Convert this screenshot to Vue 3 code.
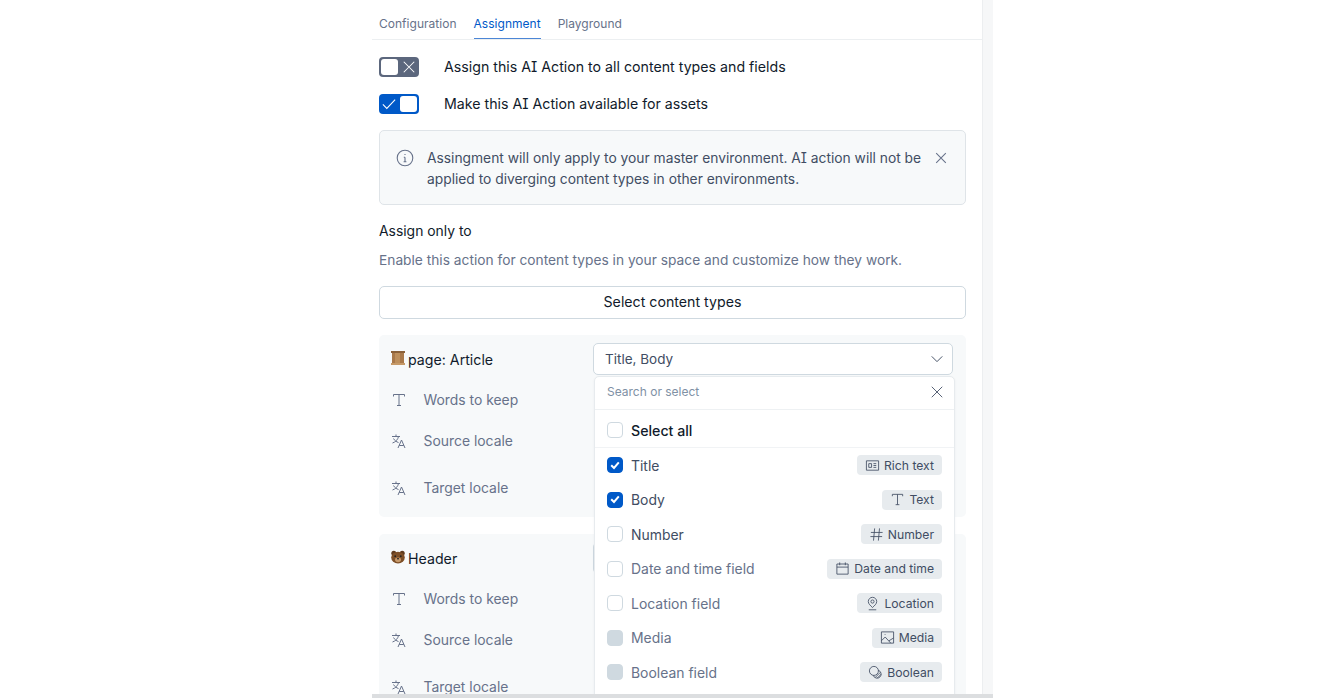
<script setup>
const icons = {
  text: "M2.5 4.5V2.5h11v2M8 2.5v11M6 13.5h4",
  rich: "M1.5 3h13v10h-13zM4 6h3v4H4zM9 6h3M9 8h3M9 10h3",
  number: "M6 1.5 4.8 14.5M11.2 1.5 10 14.5M2 5.8h12.5M1.5 10.2H14",
  date: "M2 3.2h12v10.8H2zM2 6.5h12M5 1.5v3M11 1.5v3",
  location: "M8 12.3C6 10.3 3.5 8.5 3.5 5.9a4.5 4.5 0 0 1 9 0c0 2.6-2.5 4.4-4.5 6.4zM8 4.2a1.7 1.7 0 1 0 0 3.4 1.7 1.7 0 0 0 0-3.4zM4 14.7h8",
  media: "M1.5 2h13v12h-13zM1.5 11.5 5.5 7.5 11.5 14M9.5 11.5 14.5 8.5M5 4.8h.8",
  boolean: "M6.3 1.5a4.8 4.8 0 1 0 0 9.6 4.8 4.8 0 0 0 0-9.6zM10.8 5.6a4.3 4.3 0 1 1-5.2 5.4M7.8 13.2l5.4-5.4M9.8 14l4.2-4.2",
  locale: "M1 3.5h8M5 1.5v2M7.5 3.5C7 6.5 4.5 9 1.5 10M2.5 5.5c1 2 3 3.5 5 4M7 15l3.5-8 3.5 8M8.2 12.5h4.6"
}

const fields = [
  { name: "Title", type: "Rich text", icon: "rich", state: "checked" },
  { name: "Body", type: "Text", icon: "text", state: "checked" },
  { name: "Number", type: "Number", icon: "number", state: "" },
  { name: "Date and time field", type: "Date and time", icon: "date", state: "", muted: true },
  { name: "Location field", type: "Location", icon: "location", state: "", muted: true },
  { name: "Media", type: "Media", icon: "media", state: "disabled", muted: true },
  { name: "Boolean field", type: "Boolean", icon: "boolean", state: "disabled", muted: true }
]

const params = [
  { label: "Words to keep", icon: "text" },
  { label: "Source locale", icon: "locale" },
  { label: "Target locale", icon: "locale", wide: true }
]
</script>

<template>
  <div class="page">
    <div class="sheet">
      <div class="columns">
        <main class="panel">
          <nav class="tabs">
            <a>Configuration</a>
            <a class="active">Assignment</a>
            <a>Playground</a>
          </nav>

          <div class="content">
            <div class="switch-row">
              <span class="switch off">
                <span class="knob"></span>
                <svg viewBox="0 0 16 16" class="switch-icon"><path d="M2 2l12 12M14 2 2 14" /></svg>
              </span>
              <span class="switch-label">Assign this AI Action to all content types and fields</span>
            </div>
            <div class="switch-row">
              <span class="switch on">
                <svg viewBox="0 0 16 16" class="switch-icon"><path d="M1 8.5 5.5 13 15 3" /></svg>
                <span class="knob"></span>
              </span>
              <span class="switch-label">Make this AI Action available for assets</span>
            </div>

            <div class="note">
              <svg viewBox="0 0 18 18" class="note-icon">
                <circle cx="9" cy="9" r="7.8" />
                <path d="M9 8.2v4.6M7.8 8.2H9M7.6 12.8h2.8M9 5v.9" />
              </svg>
              <p>Assingment will only apply to your master environment. AI action will not be applied to diverging content types in other environments.</p>
              <svg viewBox="0 0 16 16" class="close-icon"><path d="M2.5 2.5l11 11M13.5 2.5l-11 11" /></svg>
            </div>

            <h3>Assign only to</h3>
            <p class="hint">Enable this action for content types in your space and customize how they work.</p>
            <button class="select-btn">Select content types</button>

            <section class="card">
              <div class="card-head">
                <span class="title">
                  <svg viewBox="0 0 14 14" class="emoji">
                    <rect x="1" y="1" width="12" height="12" fill="#a9794a" />
                    <rect x="0" y="0" width="14" height="2" fill="#8a6038" />
                    <rect x="0" y="12" width="14" height="2" fill="#c69a68" />
                    <rect x="4" y="2" width="5" height="10" fill="#bd8f5c" />
                  </svg>
                  page: Article
                </span>
                <div class="select">
                  <span>Title, Body</span>
                  <svg viewBox="0 0 16 16" class="chevron"><path d="M2 5l6 6 6-6" /></svg>
                </div>
              </div>
              <div v-for="p in params" :key="p.label" class="param" :class="{ wide: p.wide }">
                <svg viewBox="0 0 16 16" class="param-icon"><path :d="icons[p.icon]" /></svg>
                <span>{{ p.label }}</span>
              </div>

              <div class="dropdown">
                <div class="search">
                  <span>Search or select</span>
                  <svg viewBox="0 0 16 16" class="search-close"><path d="M2 2l12 12M14 2 2 14" /></svg>
                </div>
                <div class="all">
                  <span class="box"></span>
                  <span>Select all</span>
                </div>
                <div v-for="f in fields" :key="f.name" class="option" :class="{ muted: f.muted }">
                  <span class="box" :class="f.state">
                    <svg v-if="f.state === 'checked'" viewBox="0 0 16 16"><path d="M4.2 8.2 7 11l4.8-5.6" /></svg>
                  </span>
                  <span class="option-name">{{ f.name }}</span>
                  <span class="badge">
                    <svg viewBox="0 0 16 16"><path :d="icons[f.icon]" /></svg>
                    {{ f.type }}
                  </span>
                </div>
              </div>
            </section>

            <section class="card">
              <div class="card-head">
                <span class="title">
                  <svg viewBox="0 0 14 14" class="emoji">
                    <circle cx="2.8" cy="3.2" r="2.5" fill="#5f3b1e" />
                    <circle cx="11.2" cy="3.2" r="2.5" fill="#5f3b1e" />
                    <ellipse cx="7" cy="7.6" rx="6.8" ry="5.8" fill="#7d4f27" />
                    <ellipse cx="7" cy="9.8" rx="3" ry="2.4" fill="#c79a6b" />
                    <circle cx="4.2" cy="6.2" r=".9" fill="#222" />
                    <circle cx="9.8" cy="6.2" r=".9" fill="#222" />
                    <ellipse cx="7" cy="8.8" rx="1.1" ry=".8" fill="#222" />
                  </svg>
                  Header
                </span>
                <div class="select"></div>
              </div>
              <div v-for="p in params" :key="p.label" class="param" :class="{ wide: p.wide }">
                <svg viewBox="0 0 16 16" class="param-icon"><path :d="icons[p.icon]" /></svg>
                <span>{{ p.label }}</span>
              </div>
            </section>
          </div>
        </main>
        <div class="gutter"></div>
      </div>
      <div class="strip"></div>
    </div>
  </div>
</template>

<style scoped>
.page {
  width: 1320px;
  height: 698px;
  padding-left: 372px;
  box-sizing: border-box;
  overflow: hidden;
  background: #fff;
  font-family: Inter, "Liberation Sans", sans-serif;
  font-feature-settings: "cv08";
  font-size: 14px;
  color: #111b2b;
}

.sheet {
  width: 621px;
  height: 698px;
  display: flex;
  flex-direction: column;
}

.columns {
  flex: 1;
  min-height: 0;
  display: flex;
  overflow: hidden;
}

.panel {
  width: 610px;
  flex-shrink: 0;
}

.gutter {
  flex: 1;
  background: #f6f7f8;
  border-left: 1px solid #eceef0;
}

.strip {
  height: 4px;
  background: #dcdee0;
}

.tabs {
  height: 40px;
  box-sizing: border-box;
  display: flex;
  gap: 17px;
  padding-left: 7px;
  border-bottom: 1px solid #eceff1;
}

.tabs a {
  height: 39px;
  box-sizing: border-box;
  padding-top: 16px;
  font-size: 12px;
  letter-spacing: 0.002em;
  line-height: 16px;
  color: #67728a;
}

.tabs a.active {
  color: #0059c8;
  border-bottom: 1px solid #4c86d6;
}

.content {
  width: 587px;
  margin-left: 7px;
  padding-top: 17px;
}

.switch-row {
  height: 20px;
  display: flex;
  align-items: center;
  gap: 25px;
  margin-bottom: 16.5px;
  font-size: 14.2px;
}

.switch-label {
  margin-top: -1px;
}

.switch {
  width: 40px;
  height: 20px;
  box-sizing: border-box;
  border-radius: 4px;
  padding: 2px;
  display: flex;
  align-items: stretch;
  justify-content: space-between;
}

.switch.off {
  background: #5c677d;
}

.switch.on {
  background: #0059c8;
}

.knob {
  width: 17px;
  background: #fff;
  border-radius: 3px;
}

.switch-icon {
  width: 14px;
  height: 14px;
  margin: 1px 1px 0;
  fill: none;
  stroke: #fff;
  stroke-width: 1.2;
}

.note {
  height: 75px;
  box-sizing: border-box;
  padding: 17px 17px 0 16px;
  display: flex;
  align-items: flex-start;
  background: #f7f9fa;
  border: 1px solid #dfe4e8;
  border-radius: 5px;
}

.note p {
  margin: 0 0 0 13px;
  flex: 1;
  font-size: 13.8px;
  line-height: 21px;
  color: #414d63;
}

.note-icon {
  width: 18px;
  height: 18px;
  margin-top: 1px;
  flex-shrink: 0;
  fill: none;
  stroke: #67728a;
  stroke-width: 1.1;
}

.close-icon {
  width: 14px;
  height: 14px;
  margin: 3px 0 0 11px;
  flex-shrink: 0;
  fill: none;
  stroke: #67728a;
  stroke-width: 1.2;
}

h3 {
  margin: 18px 0 0;
  font-size: 13.9px;
  line-height: 16px;
  font-weight: 400;
  color: #111b2b;
}

.hint {
  margin: 13px 0 0;
  font-size: 13.75px;
  line-height: 16px;
  color: #67728a;
}

.select-btn {
  display: block;
  width: 100%;
  height: 33px;
  margin-top: 18px;
  padding: 0 0 2px;
  font: inherit;
  font-size: 14.2px;
  color: #111b2b;
  background: #fff;
  border: 1px solid #cfd9e0;
  border-radius: 5px;
}

.card {
  position: relative;
  height: 182px;
  box-sizing: border-box;
  margin-top: 16px;
  margin-bottom: 17px;
  padding: 8px 13px 0 12px;
  background: #f7f9fa;
  border-radius: 5px;
}

.card-head {
  height: 32px;
  display: flex;
  align-items: center;
  justify-content: space-between;
}

.title {
  display: flex;
  align-items: center;
  gap: 3px;
  font-size: 14.2px;
  color: #111b2b;
}

.emoji {
  width: 14px;
  height: 14px;
  margin-top: -2px;
}

.select {
  width: 360px;
  height: 32px;
  box-sizing: border-box;
  padding: 0 8px 0 11px;
  display: flex;
  align-items: center;
  justify-content: space-between;
  background: #fff;
  border: 1px solid #cfd9e0;
  border-radius: 5px;
  font-size: 13.5px;
  color: #414d63;
}

.chevron {
  width: 14px;
  height: 14px;
  fill: none;
  stroke: #414d63;
  stroke-width: 1.1;
}

.param {
  height: 32px;
  margin-top: 9px;
  display: flex;
  align-items: center;
  gap: 16.5px;
  font-size: 13.9px;
  color: #67728a;
}

.param.wide {
  margin-top: 15px;
}

.param-icon {
  width: 16px;
  height: 16px;
  flex-shrink: 0;
  fill: none;
  stroke: #67728a;
  stroke-width: 1;
}

.dropdown {
  position: absolute;
  left: 215px;
  top: 41px;
  width: 361px;
  box-sizing: border-box;
  padding-bottom: 40px;
  background: #fff;
  border: 1px solid #e7ebee;
  border-radius: 5px 5px 0 0;
  box-shadow: 0 1px 3px rgba(25, 37, 50, 0.05);
  z-index: 2;
}

.search {
  height: 33px;
  box-sizing: border-box;
  padding: 0 10px 3px 12px;
  display: flex;
  align-items: center;
  justify-content: space-between;
  border-bottom: 1px solid #eef1f3;
  font-size: 12px;
  color: #8091a5;
}

.search-close {
  width: 14px;
  height: 14px;
  fill: none;
  stroke: #414d63;
  stroke-width: 1;
}

.all {
  height: 38px;
  box-sizing: border-box;
  padding: 3px 12px 0;
  display: flex;
  align-items: center;
  gap: 8px;
  border-bottom: 1px solid #f1f3f5;
  font-size: 14.2px;
  font-weight: 500;
  color: #111b2b;
}

.option {
  height: 34.5px;
  box-sizing: border-box;
  padding: 0 12px;
  display: flex;
  align-items: center;
  gap: 8px;
  font-size: 13.95px;
  color: #414d63;
}

.option.muted {
  color: #67728a;
}

.option-name {
  flex: 1;
}

.box {
  width: 16px;
  height: 16px;
  box-sizing: border-box;
  flex-shrink: 0;
  background: #fff;
  border: 1.5px solid #cfd9e0;
  border-radius: 4px;
}

.box svg {
  display: block;
  width: 16px;
  height: 16px;
  margin: -1.5px;
  fill: none;
  stroke: #fff;
  stroke-width: 2;
}

.box.checked {
  background: #0059c8;
  border-color: #0059c8;
}

.box.disabled {
  background: #cfd9e0;
}

.badge {
  height: 20px;
  box-sizing: border-box;
  padding: 0 8px;
  display: flex;
  align-items: center;
  gap: 4px;
  background: #e7ebee;
  border-radius: 4px;
  font-size: 12.2px;
  color: #414d63;
}

.badge svg {
  width: 15px;
  height: 15px;
  fill: none;
  stroke: #414d63;
  stroke-width: 0.9;
}
</style>
